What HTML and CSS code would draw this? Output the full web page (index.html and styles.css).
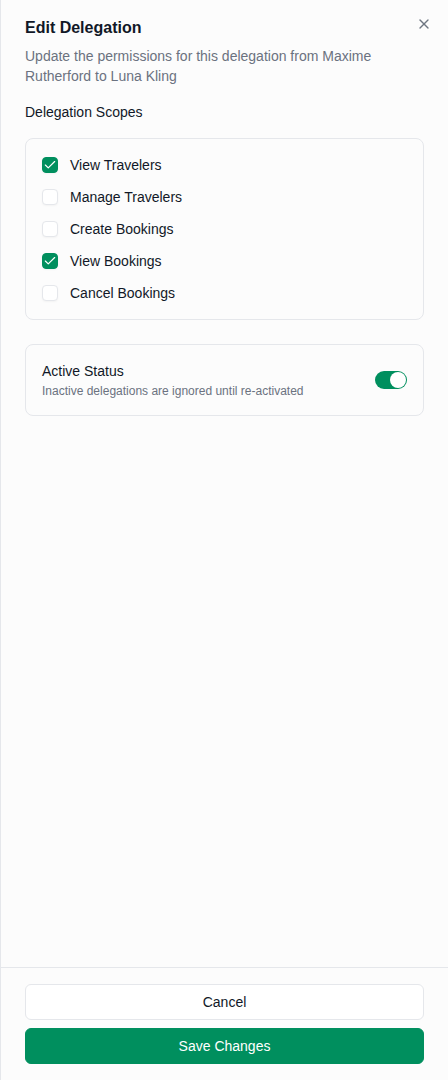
FILE: index.html
```html
<!DOCTYPE html>
<html lang="en">
<head>
<meta charset="utf-8">
<title>Edit Delegation</title>
<link rel="stylesheet" href="styles.css">
</head>
<body>
<div class="sheet">
  <div class="main">
    <div class="header">
      <h2 class="title">Edit Delegation</h2>
      <p class="desc">Update the permissions for this delegation from Maxime Rutherford to Luna Kling</p>
      <button class="close" aria-label="Close">
        <svg width="16" height="16" viewBox="0 0 24 24" fill="none" stroke="currentColor" stroke-width="2" stroke-linecap="round" stroke-linejoin="round"><path d="M18 6 6 18"/><path d="m6 6 12 12"/></svg>
      </button>
    </div>
    <div class="label">Delegation Scopes</div>
    <div class="card scopes">
      <label class="item"><span class="cb checked"><svg width="14" height="14" viewBox="0 0 24 24" fill="none" stroke="currentColor" stroke-width="2" stroke-linecap="round" stroke-linejoin="round"><path d="M20 6 9 17l-5-5"/></svg></span>View Travelers</label>
      <label class="item"><span class="cb"></span>Manage Travelers</label>
      <label class="item"><span class="cb"></span>Create Bookings</label>
      <label class="item"><span class="cb checked"><svg width="14" height="14" viewBox="0 0 24 24" fill="none" stroke="currentColor" stroke-width="2" stroke-linecap="round" stroke-linejoin="round"><path d="M20 6 9 17l-5-5"/></svg></span>View Bookings</label>
      <label class="item"><span class="cb"></span>Cancel Bookings</label>
    </div>
    <div class="card status">
      <div class="status-text">
        <div class="status-title">Active Status</div>
        <div class="status-sub">Inactive delegations are ignored until re-activated</div>
      </div>
      <span class="switch"><span class="thumb"></span></span>
    </div>
  </div>
  <div class="footer">
    <button class="btn outline">Cancel</button>
    <button class="btn primary">Save Changes</button>
  </div>
</div>
</body>
</html>
```
FILE: styles.css
```css
* { box-sizing: border-box; }
html, body { margin: 0; padding: 0; }
body {
  font-family: "Liberation Sans", Arial, sans-serif;
  color: #111827;
  background: #fcfcfc;
}
.sheet {
  width: 448px;
  height: 1080px;
  border-left: 1px solid #e5e7eb;
  background: #fcfcfc;
  display: flex;
  flex-direction: column;
}
.main {
  flex: 1;
  padding: 17px 24px 0 24px;
}
.header { position: relative; }
.title {
  margin: 0;
  font-size: 16px;
  line-height: 22px;
  font-weight: 700;
  color: #111827;
}
.desc {
  margin: 7px 0 0 0;
  font-size: 14px;
  line-height: 20px;
  color: #6b7280;
  padding-right: 8px;
}
.close {
  position: absolute;
  top: -1px;
  right: -8px;
  width: 16px;
  height: 16px;
  padding: 0;
  border: 0;
  background: none;
  color: #4b5563;
  opacity: 0.8;
  display: flex;
  align-items: center;
  justify-content: center;
}
.label {
  margin-top: 16px;
  font-size: 14px;
  line-height: 20px;
  color: #111827;
}
.card {
  border: 1px solid #e5e7eb;
  border-radius: 8px;
  padding: 16px;
}
.scopes {
  margin-top: 16px;
  display: flex;
  flex-direction: column;
  gap: 12px;
}
.item {
  display: flex;
  align-items: center;
  gap: 12px;
  font-size: 14px;
  line-height: 20px;
  color: #111827;
}
.cb {
  width: 16px;
  height: 16px;
  border: 1px solid #e5e7eb;
  border-radius: 4px;
  background: #fff;
  display: flex;
  align-items: center;
  justify-content: center;
  box-shadow: 0 1px 2px rgba(0,0,0,0.04);
}
.cb.checked {
  background: #008f5e;
  border-color: #008f5e;
  color: #fff;
}
.status {
  margin-top: 24px;
  display: flex;
  align-items: center;
  justify-content: space-between;
}
.status-title {
  font-size: 14px;
  line-height: 20px;
  color: #111827;
}
.status-sub {
  margin-top: 2px;
  font-size: 12px;
  line-height: 16px;
  color: #6b7280;
}
.switch {
  width: 32px;
  height: 18px;
  border-radius: 9px;
  background: #008f5e;
  display: flex;
  align-items: center;
  justify-content: flex-end;
  padding: 1px;
}
.thumb {
  width: 16px;
  height: 16px;
  border-radius: 50%;
  background: #fff;
}
.footer {
  border-top: 1px solid #e5e7eb;
  padding: 16px 24px;
  display: flex;
  flex-direction: column;
  gap: 8px;
}
.btn {
  height: 36px;
  border-radius: 6px;
  font-family: inherit;
  font-size: 14px;
  font-weight: 500;
  width: 100%;
}
.outline {
  background: #fff;
  border: 1px solid #e5e7eb;
  color: #111827;
}
.primary {
  background: #008f5e;
  border: 1px solid #008f5e;
  color: #fff;
}
```
